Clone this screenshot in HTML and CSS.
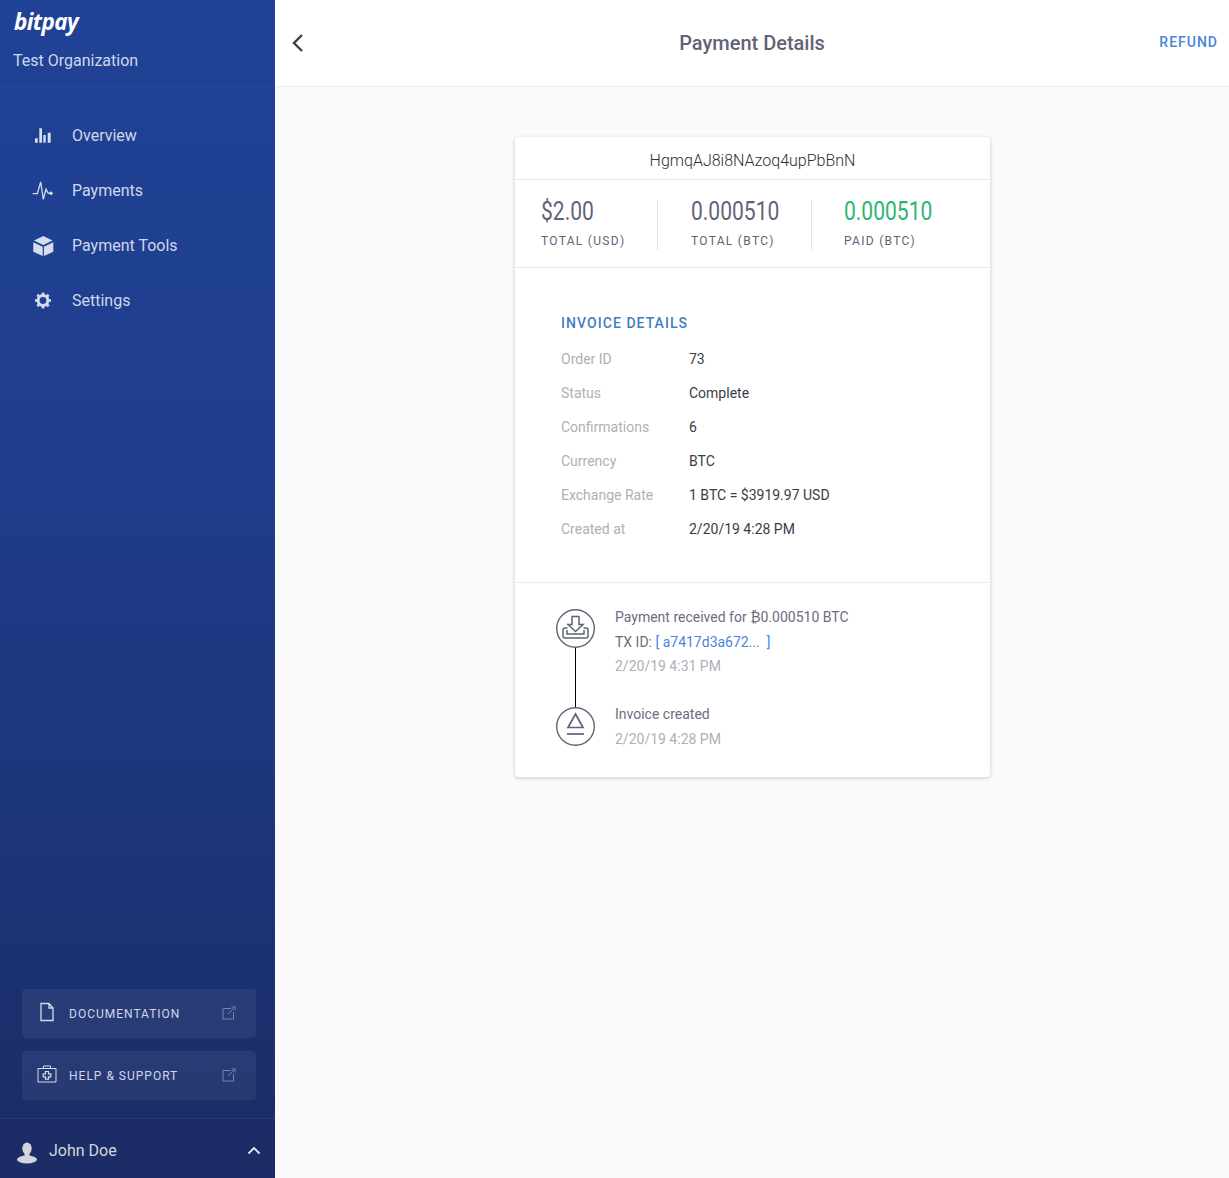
FILE: index.html
```html
<!DOCTYPE html>
<html lang="en">
<head>
    <meta charset="UTF-8">
    <meta name="viewport" content="width=device-width, initial-scale=1.0">
    <title>Payment Details</title>
    <link rel="stylesheet" href="styles.css">
</head>
<body>
    <div class="sidebar">
        <div class="brand">
            <div class="logo">bitpay</div>
            <div class="org">Test Organization</div>
        </div>

        <div class="nav">
            <div class="nav-item">
                <svg class="nav-icon" viewBox="0 0 24 24"><path d="M4 14.300h2.700v4.400H4zM8.300 4.300H11v14.400H8.300zM12.300 11h2.400v7.700h-2.400zM16.700 8.700h3v10h-3z" fill="#d5dcee"/></svg>
                <span>Overview</span>
            </div>
            <div class="nav-item">
                <svg class="nav-icon" viewBox="0 0 24 24"><path d="M1.700 14.700h4.600L9.700 3l2.600 17.300L15 10.300l2.300 4H20" fill="none" stroke="#d5dcee" stroke-width="1.300"/><circle cx="20" cy="14.300" r="1.700" fill="#d5dcee"/></svg>
                <span>Payments</span>
            </div>
            <div class="nav-item">
                <svg class="nav-icon" viewBox="0 0 24 24"><path d="M12.300 2l9.300 4.500-9.300 4.500L3 6.500zM2.300 8.300l9.400 4.500V22l-9.400-4.200zM22.300 8.300l-9.400 4.500V22l9.400-4.200z" fill="#d5dcee"/></svg>
                <span>Payment Tools</span>
            </div>
            <div class="nav-item">
                <svg class="nav-icon" viewBox="0 0 24 24"><circle cx="12" cy="11.500" r="4.900" fill="none" stroke="#d5dcee" stroke-width="3"/><circle cx="12" cy="11.500" r="6.900" fill="none" stroke="#d5dcee" stroke-width="2.200" pathLength="48" stroke-dasharray="3 3" stroke-dashoffset="1.500"/></svg>
                <span>Settings</span>
            </div>
        </div>

        <div class="side-links">
            <div class="side-btn">
                <svg class="side-icon" viewBox="0 0 20 20"><path d="M4 1.500h8l4 4.500v12.500H4zM12 1.500V6h4" fill="none" stroke="#d5dcee" stroke-width="1.300"/></svg>
                <span class="side-label">DOCUMENTATION</span>
                <svg class="ext-icon" viewBox="0 0 14 14"><path d="M9 2.500H1v10.500h10.500V6M6 8l7-7M9.500 1H13v3.500" fill="none" stroke="#7385ad" stroke-width="1"/></svg>
            </div>
            <div class="side-btn">
                <svg class="side-icon" viewBox="0 0 20 20"><path d="M1 4.500h18v13.500H1zM6.500 4.500V2h7v2.500" fill="none" stroke="#d5dcee" stroke-width="1"/><path d="M8.500 7.500h3v2.300h2.300v3h-2.300v2.300h-3v-2.300H6.200v-3h2.300z" fill="none" stroke="#d5dcee" stroke-width="1.200"/></svg>
                <span class="side-label">HELP &amp; SUPPORT</span>
                <svg class="ext-icon" viewBox="0 0 14 14"><path d="M9 2.500H1v10.500h10.500V6M6 8l7-7M9.500 1H13v3.500" fill="none" stroke="#7385ad" stroke-width="1"/></svg>
            </div>
        </div>

        <div class="user">
            <svg class="user-icon" viewBox="0 0 24 22"><ellipse cx="12" cy="6.500" rx="4.700" ry="6" fill="#d3d6dd"/><path d="M9.500 10h5v5h-5z" fill="#d3d6dd"/><ellipse cx="12" cy="17.500" rx="10" ry="4" fill="#d3d6dd"/></svg>
            <span class="user-name">John Doe</span>
            <svg class="chevron-up" viewBox="0 0 14 9"><path d="M1.500 7.500L7 2l5.500 5.500" fill="none" stroke="#e6e9f0" stroke-width="1.800"/></svg>
        </div>
    </div>

    <div class="main">
        <div class="topbar">
            <div class="topbar-side">
                <svg class="back" viewBox="0 0 14 20"><path d="M11 2L3 10l8 8" fill="none" stroke="#3b3f4c" stroke-width="2.400"/></svg>
            </div>
            <div class="page-title">Payment Details</div>
            <div class="topbar-side refund">REFUND</div>
        </div>

        <div class="content">
            <div class="card">
                <div class="hash">HgmqAJ8i8NAzoq4upPbBnN</div>

                <div class="stats">
                    <div class="stat stat-usd">
                        <div class="stat-value">$2.00</div>
                        <div class="stat-label">TOTAL (USD)</div>
                    </div>
                    <div class="stat stat-total">
                        <div class="stat-value">0.000510</div>
                        <div class="stat-label">TOTAL (BTC)</div>
                    </div>
                    <div class="stat stat-paid">
                        <div class="stat-value green">0.000510</div>
                        <div class="stat-label">PAID (BTC)</div>
                    </div>
                </div>

                <div class="details">
                    <div class="details-title">INVOICE DETAILS</div>
                    <div class="row"><span class="key">Order ID</span><span class="val">73</span></div>
                    <div class="row"><span class="key">Status</span><span class="val">Complete</span></div>
                    <div class="row"><span class="key">Confirmations</span><span class="val">6</span></div>
                    <div class="row"><span class="key">Currency</span><span class="val">BTC</span></div>
                    <div class="row"><span class="key">Exchange Rate</span><span class="val">1 BTC = $3919.97 USD</span></div>
                    <div class="row"><span class="key">Created at</span><span class="val">2/20/19 4:28 PM</span></div>
                </div>

                <div class="timeline">
                    <div class="event event-first">
                        <div class="event-mark">
                            <svg class="event-icon" viewBox="0 0 39 39"><circle cx="19.500" cy="19.500" r="18.800" fill="#fff" stroke="#5f6377" stroke-width="1.400"/><path d="M16 7.500h7v8h4l-7.500 7-7.500-7h4z" fill="none" stroke="#5f6377" stroke-width="1.500"/><path d="M11.500 19H9a2 2 0 0 0-2 2v6a2 2 0 0 0 2 2h21a2 2 0 0 0 2-2v-6a2 2 0 0 0-2-2h-2.500M11 21v4h17v-4" fill="none" stroke="#5f6377" stroke-width="1.500"/></svg>
                            <div class="event-line"></div>
                        </div>
                        <div class="event-text">
                            <div>Payment received for ₿0.000510 BTC</div>
                            <div>TX ID: <span class="tx">[ a7417d3a672...&nbsp; ]</span></div>
                            <div class="muted">2/20/19 4:31 PM</div>
                        </div>
                    </div>
                    <div class="event event-last">
                        <div class="event-mark">
                            <svg class="event-icon" viewBox="0 0 39 39"><circle cx="19.500" cy="19.500" r="18.800" fill="#fff" stroke="#5f6377" stroke-width="1.400"/><path d="M19.500 7l7.500 13.500H12z" fill="none" stroke="#5f6377" stroke-width="1.700"/><path d="M11 27h17" stroke="#5f6377" stroke-width="1.700"/></svg>
                        </div>
                        <div class="event-text">
                            <div>Invoice created</div>
                            <div class="muted">2/20/19 4:28 PM</div>
                        </div>
                    </div>
                </div>
            </div>
        </div>
    </div>
</body>
</html>
```

FILE: styles.css
```css
* {
    box-sizing: border-box;
}

body {
    margin: 0;
    height: 1178px;
    display: flex;
    font-family: Roboto, "Liberation Sans", sans-serif;
    background: #fafafa;
    overflow: hidden;
}

/* sidebar */
.sidebar {
    width: 275px;
    height: 100%;
    display: flex;
    flex-direction: column;
    background: linear-gradient(180deg, #204296 0%, #1f3d8c 40%, #1b2c66 100%);
    color: #d5dcee;
}

.brand {
    height: 87px;
    padding: 7px 0 0 14px;
    border-bottom: 1px solid #2a4a9c;
}

.logo {
    font-family: "Open Sans", sans-serif;
    font-size: 22.500px;
    line-height: 30px;
    font-weight: 700;
    font-style: italic;
    letter-spacing: -0.6px;
    color: #fff;
}

.org {
    margin: 14px 0 0 -1px;
    font-size: 16px;
    line-height: 20px;
    color: #d0d7ea;
}

.nav {
    padding-top: 21px;
}

.nav-item {
    height: 55px;
    display: flex;
    align-items: center;
    padding-left: 31px;
    font-size: 16px;
    color: #d0d7ea;
}

.nav-icon {
    width: 24px;
    height: 24px;
    margin-right: 17px;
}

.side-links {
    margin-top: auto;
    padding: 0 19px 18px 22px;
}

.side-btn {
    height: 49px;
    margin-bottom: 13px;
    display: flex;
    align-items: center;
    padding: 0 20px 0 15px;
    border-radius: 4px;
    background: rgba(255, 255, 255, 0.06);
}

.side-btn:last-child {
    margin-bottom: 0;
}

.side-icon {
    width: 20px;
    height: 20px;
    margin-right: 12px;
    margin-top: -4px;
}

.side-label {
    flex: 1;
    font-size: 12px;
    letter-spacing: 1px;
    color: #d0d7ea;
}

.ext-icon {
    width: 14px;
    height: 14px;
    margin-top: -2px;
}

.user {
    height: 60px;
    display: flex;
    align-items: center;
    padding: 4px 14px 0 15px;
    border-top: 1px solid #24406f;
    background: #1b2c66;
}

.user-icon {
    width: 24px;
    height: 22px;
    margin-right: 10px;
    margin-top: 4px;
}

.user-name {
    flex: 1;
    font-size: 16px;
    color: #d3d6dd;
}

.chevron-up {
    width: 14px;
    height: 9px;
}

/* main area */
.main {
    flex: 1;
    display: flex;
    flex-direction: column;
}

.topbar {
    height: 87px;
    display: flex;
    align-items: center;
    padding: 0 11px;
    background: #fff;
    border-bottom: 1px solid #eeeeee;
}

.topbar-side {
    flex: 1;
}

.back {
    display: block;
    width: 14px;
    height: 20px;
    margin-left: 5px;
}

.page-title {
    font-size: 20px;
    font-weight: 500;
    color: #5f6377;
}

.refund {
    text-align: right;
    font-size: 14px;
    font-weight: 500;
    letter-spacing: 1px;
    color: #4a85dc;
    margin-top: -2px;
}

.content {
    flex: 1;
    padding: 50px 0 0 1px;
}

.card {
    width: 475px;
    margin: 0 auto;
    background: #fff;
    border-radius: 4px;
    box-shadow: 0 1px 4px rgba(0, 0, 0, 0.2);
}

.hash {
    height: 43px;
    padding-top: 14px;
    text-align: center;
    font-size: 16px;
    line-height: 19px;
    font-weight: 300;
    color: #2c2f38;
    border-bottom: 1px solid #ececec;
}

.stats {
    height: 88px;
    display: flex;
    align-items: flex-start;
    padding-top: 20px;
    border-bottom: 1px solid #ececec;
}

.stat {
    height: 50px;
    padding-left: 26px;
    border-right: 1px solid #e4e4e4;
}

.stat-usd {
    width: 143px;
}

.stat-total {
    width: 154px;
    padding-left: 33px;
}

.stat-paid {
    padding-left: 32px;
    border-right: none;
}

.stat-value {
    font-size: 25.500px;
    line-height: 23px;
    color: #5f6377;
    transform: scaleX(0.825);
    transform-origin: left;
}

.green {
    color: #2bb673;
}

.stat-label {
    margin-top: 10px;
    font-size: 12px;
    line-height: 16px;
    letter-spacing: 1.300px;
    color: #5f6377;
}

.details {
    height: 315px;
    padding: 47px 46px 0;
    border-bottom: 1px solid #ececec;
}

.details-title {
    font-size: 14px;
    line-height: 16px;
    font-weight: 500;
    letter-spacing: 1.050px;
    color: #3f7fbf;
    margin-bottom: 11px;
}

.row {
    height: 34px;
    display: flex;
    align-items: center;
    font-size: 14px;
}

.key {
    width: 128px;
    color: #adb0b8;
}

.val {
    color: #3a3d46;
}

.timeline {
    height: 194px;
    padding: 21px 0 0 41px;
}

.event {
    display: flex;
}

.event-first {
    height: 97px;
}

.event-mark {
    position: relative;
    width: 39px;
    margin-right: 20px;
    padding-top: 5px;
}

.event-last .event-mark {
    padding-top: 6px;
}

.event-icon {
    display: block;
    width: 39px;
    height: 39px;
    position: relative;
    z-index: 1;
}

.event-line {
    position: absolute;
    left: 19px;
    top: 43px;
    width: 1px;
    height: 60px;
    background: #000;
}

.event-text {
    font-size: 14px;
    line-height: 24.500px;
    color: #6a6e80;
    padding-top: 1px;
}

.tx {
    color: #4a85dc;
}

.muted {
    color: #adb0b8;
}
```
